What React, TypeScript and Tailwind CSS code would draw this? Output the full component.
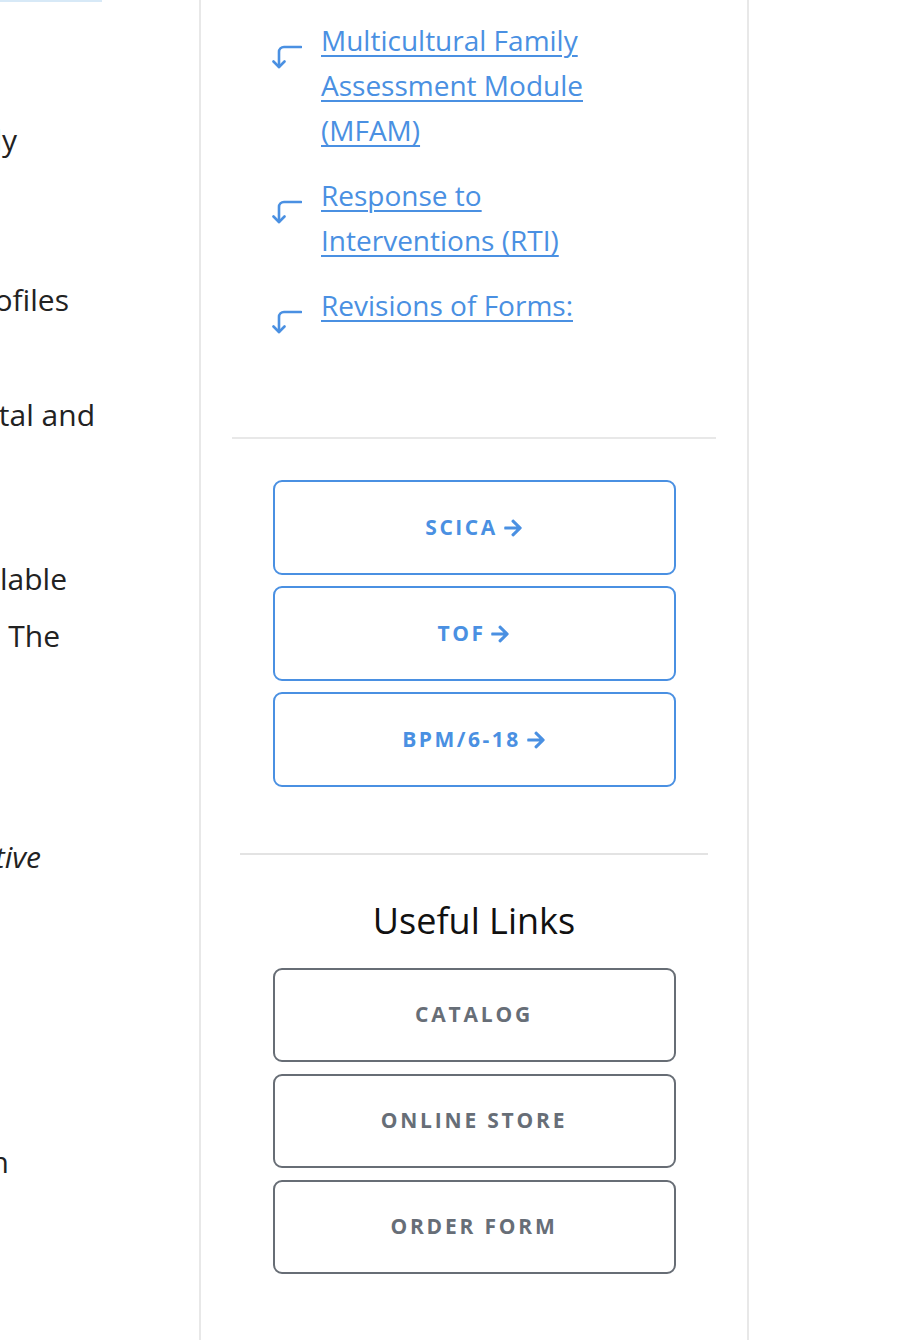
import React from 'react';
import { FaArrowRight } from 'react-icons/fa';

const CornerArrow: React.FC = () => (
  <svg width="30" height="26" viewBox="0 0 30 26" fill="none" stroke="#4a90e2" strokeWidth="2.6" strokeLinecap="round" strokeLinejoin="round" className="shrink-0 mt-[26px] -ml-[1px]">
    <path d="M29 3H12a5 5 0 0 0-5 5v15" />
    <path d="M1.5 17.5 7 23l5.5-5.5" />
  </svg>
);

const links = [
  'Multicultural Family Assessment Module (MFAM)',
  'Response to Interventions (RTI)',
  'Revisions of Forms:',
];

const formButtons = ['SCICA', 'TOF', 'BPM/6-18'];
const usefulLinks = ['CATALOG', 'ONLINE STORE', 'ORDER FORM'];

export default function App() {
  return (
    <div className="flex w-[918px] min-h-[1340px] bg-white font-['Open_Sans',sans-serif]">
      {/* main content, clipped at the sidebar edge */}
      <div className="w-[199px] shrink-0 overflow-hidden text-[30px] leading-[57px] text-[#222]">
        <div className="h-[2px] w-[102px] bg-[#d7e9f7]" />
        <div className="flex justify-end whitespace-nowrap pr-[182px] mt-[109px]">measures completed by the family</div>
        <div className="flex justify-end whitespace-nowrap pr-[130px] mt-[103px]">and scored on the profiles</div>
        <div className="flex justify-end whitespace-nowrap pr-[104px] mt-[58px]">for both the developmental and</div>
        <div className="flex justify-end whitespace-nowrap pr-[132px] mt-[107px]">Translations are available</div>
        <div className="flex justify-end whitespace-nowrap pr-[139px]">for many languages. The</div>
        <div className="flex justify-end whitespace-nowrap pr-[158px] mt-[164px] italic">Multicultural Supportive</div>
        <div className="flex justify-end whitespace-nowrap pr-[190px] mt-[248px]">for each population</div>
      </div>

      {/* sidebar */}
      <aside className="w-[550px] shrink-0 border-x-2 border-[#e8e8e8] px-[31px] pt-[18px] pb-10">
        <ul className="pl-[41px] space-y-[20px]">
          {links.map((l) => (
            <li key={l} className="flex gap-[19px]">
              <CornerArrow />
              <a href="#" className="w-[280px] text-[28px] leading-[45px] text-[#4a90e2] underline underline-offset-[4px] decoration-[1.5px]">
                {l}
              </a>
            </li>
          ))}
        </ul>

        <div className="mt-[102px] h-[2px] bg-[#e8e8e8]" />

        <div className="mt-[41px] flex flex-col gap-[11px] items-center">
          {formButtons.map((b) => (
            <a
              key={b}
              href="#"
              className="w-[403px] h-[95px] rounded-[9px] border-2 border-[#4a90e2] flex items-center justify-center gap-[5px] text-[21px] font-bold tracking-[2.5px] text-[#4a90e2]"
            >
              <span>{b}</span>
              <FaArrowRight className="w-[20px] h-[20px]" />
            </a>
          ))}
        </div>

        <div className="mt-[66px] mx-2 h-[2px] bg-[#e3e3e3]" />

        <h3 className="mt-[45px] text-center text-[36px] leading-[42px] font-normal text-[#111]">Useful Links</h3>

        <div className="mt-[26px] flex flex-col gap-[12px] items-center">
          {usefulLinks.map((b) => (
            <a
              key={b}
              href="#"
              className="w-[403px] h-[94px] rounded-[9px] border-2 border-[#676d75] flex items-center justify-center text-[21px] font-bold tracking-[2.8px] text-[#676e77]"
            >
              {b}
            </a>
          ))}
        </div>
      </aside>

      <div className="flex-1" />
    </div>
  );
}
